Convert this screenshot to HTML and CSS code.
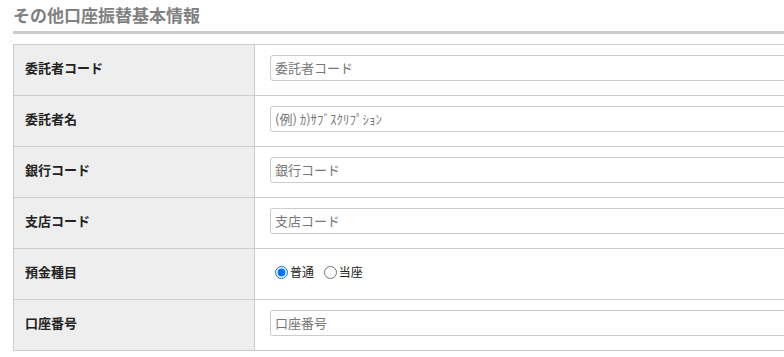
FILE: index.html
```html
<!DOCTYPE html>
<html lang="ja">
<head>
    <meta charset="UTF-8">
    <title>その他口座振替基本情報</title>
    <link rel="stylesheet" href="styles.css">
</head>
<body>
    <div class="wrap">
        <h2 class="ttl">その他口座振替基本情報</h2>

        <table class="tab">
            <tr>
                <th>委託者コード</th>
                <td><input class="ipt" type="text" placeholder="委託者コード"></td>
            </tr>
            <tr>
                <th>委託者名</th>
                <td><input class="ipt" type="text" placeholder="(例) ｶ)ｻﾌﾞｽｸﾘﾌﾟｼｮﾝ"></td>
            </tr>
            <tr>
                <th>銀行コード</th>
                <td><input class="ipt" type="text" placeholder="銀行コード"></td>
            </tr>
            <tr>
                <th>支店コード</th>
                <td><input class="ipt" type="text" placeholder="支店コード"></td>
            </tr>
            <tr>
                <th>預金種目</th>
                <td>
                    <label class="rdo"><input type="radio" name="kind" checked>普通</label>
                    <label class="rdo"><input type="radio" name="kind">当座</label>
                </td>
            </tr>
            <tr>
                <th>口座番号</th>
                <td><input class="ipt" type="text" placeholder="口座番号"></td>
            </tr>
        </table>
    </div>
</body>
</html>
```

FILE: styles.css
```css
/* 全体 */
body {
    margin: 0;
    overflow: hidden;
    background-color: #fff;
    font-family: "Noto Sans CJK JP", "Liberation Sans", sans-serif;
    color: #333;
}

.wrap {
    padding: 2px 0 0 13px;
    overflow: hidden;
}

/* 見出し */
.ttl {
    margin: 0 0 10px;
    padding-bottom: 4px;
    font-size: 17px;
    font-weight: bold;
    line-height: 25px;
    color: #808080;
    border-bottom: 3px solid #ccc;
}

/* フォーム表 */
.tab {
    width: 900px;
    border-collapse: collapse;
}

.tab th,
.tab td {
    height: 51px;
    padding: 0 0 5px;
    border: 1px solid #ccc;
    box-sizing: border-box;
}

.tab th {
    width: 241px;
    padding-left: 11px;
    text-align: left;
    font-size: 13px;
    font-weight: bold;
    color: #222;
    background-color: #eee;
}

.tab td {
    padding-left: 15px;
    font-size: 12px;
}

/* 入力欄 */
.ipt {
    display: block;
    width: 620px;
    height: 26px;
    padding: 0 4px;
    border: 1px solid #ccc;
    border-radius: 3px;
    box-sizing: border-box;
    font-family: inherit;
    font-size: 13px;
    color: #333;
}

.ipt::placeholder {
    color: #777;
}

/* ラジオ */
.rdo {
    font-size: 12px;
    color: #222;
    margin-right: 2px;
}

.rdo input {
    margin: 0 2px 0 5px;
    vertical-align: -2px;
}
```
